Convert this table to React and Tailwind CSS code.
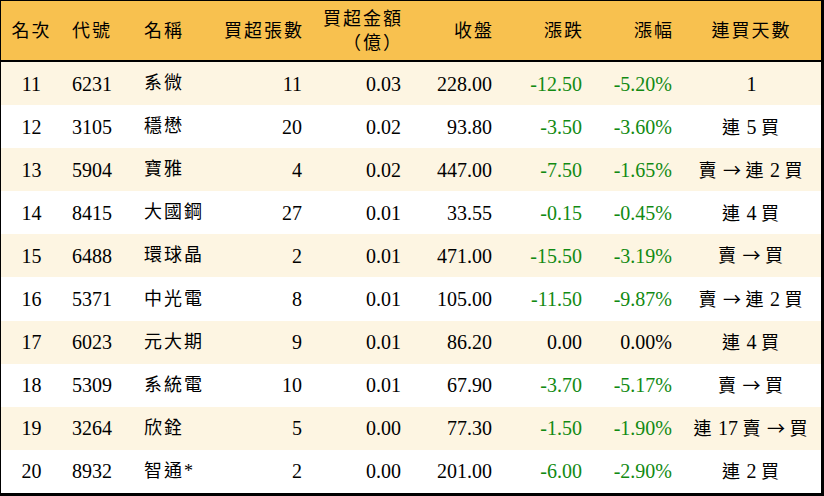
import React from 'react';

const rows = [
  ['11', '6231', '系微', '11', '0.03', '228.00', '-12.50', '-5.20%', '1'],
  ['12', '3105', '穩懋', '20', '0.02', '93.80', '-3.50', '-3.60%', '連 5 買'],
  ['13', '5904', '寶雅', '4', '0.02', '447.00', '-7.50', '-1.65%', '賣 → 連 2 買'],
  ['14', '8415', '大國鋼', '27', '0.01', '33.55', '-0.15', '-0.45%', '連 4 買'],
  ['15', '6488', '環球晶', '2', '0.01', '471.00', '-15.50', '-3.19%', '賣 → 買'],
  ['16', '5371', '中光電', '8', '0.01', '105.00', '-11.50', '-9.87%', '賣 → 連 2 買'],
  ['17', '6023', '元大期', '9', '0.01', '86.20', '0.00', '0.00%', '連 4 買'],
  ['18', '5309', '系統電', '10', '0.01', '67.90', '-3.70', '-5.17%', '賣 → 買'],
  ['19', '3264', '欣銓', '5', '0.00', '77.30', '-1.50', '-1.90%', '連 17 賣 → 買'],
  ['20', '8932', '智通*', '2', '0.00', '201.00', '-6.00', '-2.90%', '連 2 買'],
];

const cols = [
  'w-[61px] text-center',
  'w-[68px] pl-[10px] text-left',
  'w-[85px] pl-[14px] text-left',
  'w-[97px] pr-[10px] text-right',
  'w-[99px] pr-[10px] text-right',
  'w-[91px] pr-[10px] text-right',
  'w-[90px] pr-[10px] text-right',
  'w-[90px] pr-[10px] text-right',
  'flex-1 text-center',
];

// header text has 2px trailing tracking, so right columns get 2px less padding
const headCols = [
  'w-[61px] text-center',
  'w-[68px] pl-[10px] text-left',
  'w-[85px] pl-[14px] text-left',
  'w-[97px] pr-[8px] text-right',
  'w-[99px] pr-[8px] text-right',
  'w-[91px] pr-[8px] text-right',
  'w-[90px] pr-[8px] text-right',
  'w-[90px] pr-[8px] text-right',
  'flex-1 text-center',
];

const headers = ['名次', '代號', '名稱', '買超張數', null, '收盤', '漲跌', '漲幅', '連買天數'];

// split the 連買 text so the arrow uses a wide glyph and CJK gets spacing
const Days = ({ text }) =>
  text.split(' ').map((part, i) => (
    <React.Fragment key={i}>
      {i > 0 && ' '}
      {part === '→' ? (
        <span className="font-['Noto_Sans_CJK_TC'] text-[18px]">→</span>
      ) : /\d/.test(part) ? (
        <span className="text-[20px]">{part}</span>
      ) : (
        <span className="tracking-[2px]">{part}</span>
      )}
    </React.Fragment>
  ));

const App = () => {
  return (
    <div className="w-[824px] h-[496px] flex flex-col bg-white text-black border-t border-l border-r-[3px] border-b-[3px] border-black font-['Liberation_Serif','Noto_Sans_CJK_TC',serif] text-[20px]">
      {/* Header */}
      <div className="h-[61px] flex items-center bg-[#f8c14f] border-b-2 border-black">
        {headers.map((h, i) => (
          <div key={i} className={`${headCols[i]} shrink-0 leading-[24px] text-[18px] tracking-[2px]`}>
            {h === null ? (
              <>
                買超金額
                <br />
                （億）
              </>
            ) : (
              h
            )}
          </div>
        ))}
      </div>

      {/* Rows */}
      <div className="flex-1 flex flex-col">
        {rows.map((r, ri) => (
          <div
            key={r[0]}
            className={`flex-1 flex items-center ${ri % 2 === 0 ? 'bg-[#fdf5e2]' : 'bg-white'}`}
          >
            {r.map((c, ci) => {
              const green = (ci === 6 || ci === 7) && c.startsWith('-');
              return (
                <div
                  key={ci}
                  className={`${cols[ci]} shrink-0 ${ci === 2 ? 'text-[18px] tracking-[2px]' : ''} ${ci === 8 ? 'text-[18px]' : ''} ${green ? 'text-[#128a12]' : ''}`}
                >
                  {ci === 8 ? <Days text={c} /> : c}
                </div>
              );
            })}
          </div>
        ))}
      </div>
    </div>
  );
};

export default App;
